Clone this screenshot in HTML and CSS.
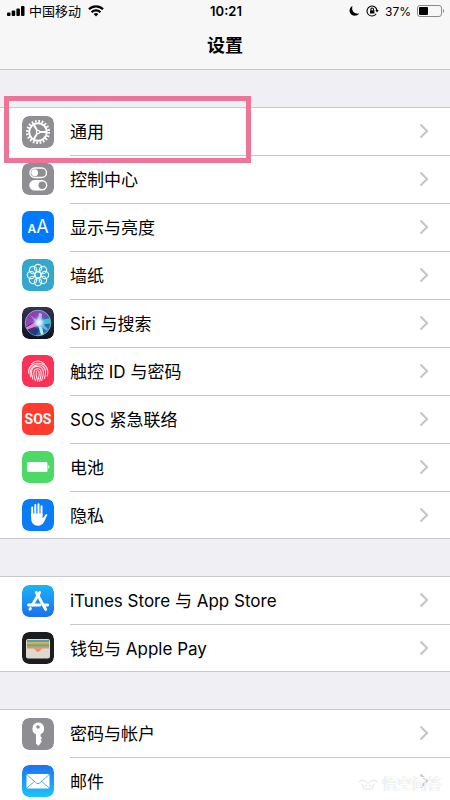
FILE: index.html
```html
<!DOCTYPE html>
<html lang="zh-CN">
<head>
    <meta charset="UTF-8">
    <meta name="viewport" content="width=device-width, initial-scale=1.0">
    <title>设置</title>
    <link rel="stylesheet" href="styles.css">
</head>
<body>
    <!-- chevron shared by all rows -->
    <svg class="defs" aria-hidden="true">
        <symbol id="chevron" viewBox="0 0 10 16">
            <path d="M1.5 1.5 8 8l-6.5 6.5" fill="none" stroke="#c4c4c8" stroke-width="2"/>
        </symbol>
    </svg>

    <div class="screen">
        <header class="top">
            <div class="status-bar">
                <div class="status-left">
                    <svg width="18" height="12" viewBox="0 0 18 12">
                        <rect x="0" y="7.500" width="3.500" height="3.500" rx="1"/>
                        <rect x="4.700" y="5.500" width="3.500" height="5.500" rx="1"/>
                        <rect x="9.400" y="3.500" width="3.500" height="7.500" rx="1"/>
                        <rect x="14" y="1" width="3.500" height="10" rx="1"/>
                    </svg>
                    <span class="carrier">中国移动</span>
                    <svg width="16" height="12" viewBox="0 0 16 12" fill="none" stroke="#000" stroke-width="2.200">
                        <path d="M1 4.300a10 10 0 0 1 14 0"/>
                        <path d="M3.600 7.200a6.300 6.300 0 0 1 8.800 0"/>
                        <path d="M8 11.500 5.600 9.100a3.500 3.500 0 0 1 4.800 0z" fill="#000" stroke="none"/>
                    </svg>
                </div>
                <span class="clock">10:21</span>
                <div class="status-right">
                    <svg width="11" height="12" viewBox="0 0 11 12">
                        <path d="M3.500 1C.8 2.300-.1 5.300 1 7.800 2.600 11.200 7.400 12 10.300 8.600 5.500 9.400 2 6 3.500 1z"/>
                    </svg>
                    <svg width="13" height="12" viewBox="0 0 13 12" fill="none" stroke="#000" stroke-width="1.100">
                        <path d="M10.200 8.800A5 5 0 1 1 11 5.500"/>
                        <path d="M9.300 5h3.400L11 7.600z" fill="#000" stroke="none"/>
                        <rect x="4" y="5.300" width="4.400" height="3.200" fill="#000" stroke="none"/>
                        <path d="M4.900 5.500V4.300a1.300 1.300 0 0 1 2.600 0v1.200"/>
                    </svg>
                    <span>37%</span>
                    <svg width="28" height="12" viewBox="0 0 28 12">
                        <rect x="0.500" y="0.500" width="24" height="11" rx="2.500" fill="none" stroke="#8a8a8a"/>
                        <rect x="2" y="2" width="9" height="8" rx="1"/>
                        <path d="M26 4v4c1.500-.6 1.500-3.400 0-4z" fill="#8a8a8a"/>
                    </svg>
                </div>
            </div>
            <h1>设置</h1>
        </header>

        <main>
            <ul class="group">
                <li class="row">
                    <a href="#general">
                        <svg class="icon" viewBox="0 0 32 32">
                            <rect width="32" height="32" rx="7" fill="#8e8e93"/>
                            <circle cx="16" cy="16" r="10.800" fill="none" stroke="#fff" stroke-width="2.600" stroke-dasharray="1.700 1.693"/>
                            <circle cx="16" cy="16" r="8.800" fill="none" stroke="#fff" stroke-width="2"/>
                            <path d="M16 16h9M16 16l-4.500-7.700M16 16l-4.500 7.700" stroke="#fff" stroke-width="2"/>
                            <circle cx="16" cy="16" r="2.200" fill="#fff"/>
                            <circle cx="16" cy="16" r="1" fill="#8e8e93"/>
                        </svg>
                        <span class="label">通用</span>
                        <svg class="chevron"><use href="#chevron"/></svg>
                    </a>
                    <div class="marker"></div>
                </li>
                <li class="row">
                    <a href="#control-center">
                        <svg class="icon" viewBox="0 0 32 32">
                            <rect width="32" height="32" rx="7" fill="#8e8e93"/>
                            <rect x="8" y="5" width="16.500" height="9.500" rx="4.700" fill="none" stroke="#fff" stroke-width="1.400"/>
                            <circle cx="12.700" cy="9.750" r="3.400" fill="#fff"/>
                            <rect x="7.300" y="17" width="18" height="10.500" rx="5.200" fill="#fff"/>
                            <circle cx="20.200" cy="22.200" r="3.700" fill="#8e8e93"/>
                        </svg>
                        <span class="label">控制中心</span>
                        <svg class="chevron"><use href="#chevron"/></svg>
                    </a>
                </li>
                <li class="row">
                    <a href="#display">
                        <span class="icon icon-display"><small>A</small>A</span>
                        <span class="label">显示与亮度</span>
                        <svg class="chevron"><use href="#chevron"/></svg>
                    </a>
                </li>
                <li class="row">
                    <a href="#wallpaper">
                        <svg class="icon" viewBox="0 0 32 32">
                            <rect width="32" height="32" rx="7" fill="#35a6cc"/>
                            <g fill="none" stroke="#e6f7fc" stroke-width="1.200">
                                <circle cx="16" cy="9" r="3.700"/>
                                <circle cx="20.950" cy="11.050" r="3.700"/>
                                <circle cx="23" cy="16" r="3.700"/>
                                <circle cx="20.950" cy="20.950" r="3.700"/>
                                <circle cx="16" cy="23" r="3.700"/>
                                <circle cx="11.050" cy="20.950" r="3.700"/>
                                <circle cx="9" cy="16" r="3.700"/>
                                <circle cx="11.050" cy="11.050" r="3.700"/>
                                <circle cx="16" cy="16" r="3"/>
                            </g>
                        </svg>
                        <span class="label">墙纸</span>
                        <svg class="chevron"><use href="#chevron"/></svg>
                    </a>
                </li>
                <li class="row">
                    <a href="#siri">
                        <svg class="icon" viewBox="0 0 32 32">
                            <defs>
                                <linearGradient id="siri-bg" x1="0" y1="0" x2="0" y2="1">
                                    <stop offset="0" stop-color="#35324e"/>
                                    <stop offset="1" stop-color="#101421"/>
                                </linearGradient>
                                <linearGradient id="siri-orb" x1="0" y1="0" x2="1" y2="1">
                                    <stop offset="0" stop-color="#a12c94"/>
                                    <stop offset="0.400" stop-color="#8350c0"/>
                                    <stop offset="0.650" stop-color="#2d62a4"/>
                                    <stop offset="1" stop-color="#169aa4"/>
                                </linearGradient>
                                <radialGradient id="siri-glow">
                                    <stop offset="0" stop-color="#fff"/>
                                    <stop offset="0.400" stop-color="#d5f0ff" stop-opacity="0.800"/>
                                    <stop offset="1" stop-color="#5fc8e8" stop-opacity="0"/>
                                </radialGradient>
                            </defs>
                            <rect width="32" height="32" rx="7" fill="url(#siri-bg)"/>
                            <circle cx="16" cy="16" r="12.800" fill="url(#siri-orb)" stroke="#7db3cf" stroke-width="0.900"/>
                            <path d="M16 16C9 15 5 19 4 20c2 5 6 8 10 8.500C17 25 18 20 16 16z" fill="#1c2a6b" opacity="0.700"/>
                            <path d="M17 13 4 20.500l1.500 2L18 18z" fill="#f47cc0"/>
                            <path d="M16 14 27.500 11l.8 5.500L17 18z" fill="#35c3d0"/>
                            <path d="M15 15l2-9 3 .8L19 16z" fill="#cfa8f4"/>
                            <path d="M8 8l10 8-1.500 2.500z" fill="#d88bea"/>
                            <path d="M15.500 16l3.500 12 2.500-1L19 15z" fill="#b8f4f6"/>
                            <path d="M18 14l8 8-1.500 1.500L16 18z" fill="#6fb0ea"/>
                            <circle cx="17" cy="15.500" r="7" fill="url(#siri-glow)"/>
                        </svg>
                        <span class="label">Siri 与搜索</span>
                        <svg class="chevron"><use href="#chevron"/></svg>
                    </a>
                </li>
                <li class="row">
                    <a href="#touch-id">
                        <svg class="icon" viewBox="0 0 32 32">
                            <rect width="32" height="32" rx="7" fill="#fc3158"/>
                            <g fill="none" stroke="#ffe3e8" stroke-width="1.100" stroke-linecap="round">
                                <path d="M9.500 8.800c4-3.500 9-3.500 13 0"/>
                                <path d="M6.500 18c-1-12 18.500-13.500 19.300-1.500.1 1.500-.1 3-.6 4.500"/>
                                <path d="M8.500 21.500C5.500 7 23.500 6.500 23.600 17c0 2.500-.4 4.500-1.300 6.500"/>
                                <path d="M10.800 24c-1-3-1.600-5.500-1.200-8 1.200-6.500 11.600-6 11.800 1 .1 3-.6 6-1.800 8.500"/>
                                <path d="M13.500 25.800C12 22 11.400 19 12 16.500c1-4 7-3.600 7.200.8.100 3.300-.6 6.200-1.600 8.900"/>
                                <path d="M15.800 26.300C14.600 23 14 20 14.200 17.500c.3-2.300 2.800-2.200 2.900 0 .1 2.500-.1 4.500-.7 6.500"/>
                            </g>
                        </svg>
                        <span class="label">触控 ID 与密码</span>
                        <svg class="chevron"><use href="#chevron"/></svg>
                    </a>
                </li>
                <li class="row">
                    <a href="#sos">
                        <span class="icon icon-sos">SOS</span>
                        <span class="label">SOS 紧急联络</span>
                        <svg class="chevron"><use href="#chevron"/></svg>
                    </a>
                </li>
                <li class="row">
                    <a href="#battery">
                        <svg class="icon" viewBox="0 0 32 32">
                            <rect width="32" height="32" rx="7" fill="#4cd964"/>
                            <rect x="5" y="11" width="20.500" height="10" rx="1.500" fill="#fff"/>
                            <path d="M26.300 14v4c1.500-.5 1.500-3.500 0-4z" fill="#fff"/>
                        </svg>
                        <span class="label">电池</span>
                        <svg class="chevron"><use href="#chevron"/></svg>
                    </a>
                </li>
                <li class="row">
                    <a href="#privacy">
                        <svg class="icon" viewBox="0 0 32 32">
                            <rect width="32" height="32" rx="7" fill="#0a7cf5"/>
                            <g stroke="#fff" stroke-width="2" stroke-linecap="round" fill="none">
                                <path d="M10.200 17V8.500M13.300 16V6M16.500 16V5.300M19.500 16V7.300"/>
                                <path d="M20.500 21.500l3.800-5.500"/>
                            </g>
                            <path d="M9.200 14.500h11.300v4.500l1.200.2 1.500-1.700 1.100.6c-1.700 3.900-3.100 8.600-8 8.600-5.100 0-7.100-3.200-7.100-7.500z" fill="#fff"/>
                        </svg>
                        <span class="label">隐私</span>
                        <svg class="chevron"><use href="#chevron"/></svg>
                    </a>
                </li>
            </ul>

            <ul class="group">
                <li class="row">
                    <a href="#itunes">
                        <svg class="icon" viewBox="0 0 32 32">
                            <defs>
                                <linearGradient id="store-bg" x1="0" y1="0" x2="0" y2="1">
                                    <stop offset="0" stop-color="#1bb4f7"/>
                                    <stop offset="1" stop-color="#1b70ee"/>
                                </linearGradient>
                            </defs>
                            <rect width="32" height="32" rx="7" fill="url(#store-bg)"/>
                            <g stroke="#fff" stroke-width="2.800" stroke-linecap="round">
                                <path d="M14.300 7.500 23.700 24.500"/>
                                <path d="M17.700 7.500 10.200 20"/>
                                <path d="M6.500 20h11.500M23 20h2.700"/>
                                <path d="M8.400 23.500l-.5.900"/>
                            </g>
                        </svg>
                        <span class="label">iTunes Store 与 App Store</span>
                        <svg class="chevron"><use href="#chevron"/></svg>
                    </a>
                </li>
                <li class="row">
                    <a href="#wallet">
                        <svg class="icon" viewBox="0 0 32 32">
                            <rect width="32" height="32" rx="7" fill="#1d1d1f"/>
                            <rect x="4" y="7" width="24" height="19.500" rx="2" fill="#ded9cf"/>
                            <path d="M5 8h22v2.300H5z" fill="#5b9cb0"/>
                            <path d="M5 10.300h22v2.400H5z" fill="#d6ad45"/>
                            <path d="M5 12.300h22v2.500H5z" fill="#73a660"/>
                            <path d="M5 14.800h22v1.600H5z" fill="#ee8973"/>
                            <path d="M11 16.200h10c-2 0-2.600 3.600-5 3.600s-3-3.600-5-3.600z" fill="#ee8973"/>
                        </svg>
                        <span class="label">钱包与 Apple Pay</span>
                        <svg class="chevron"><use href="#chevron"/></svg>
                    </a>
                </li>
            </ul>

            <ul class="group">
                <li class="row">
                    <a href="#passwords">
                        <svg class="icon" viewBox="0 0 32 32">
                            <rect width="32" height="32" rx="7" fill="#8e8e93"/>
                            <path d="M16 4.500a6.200 6.200 0 0 1 2.600 11.800v2.200l1.500 1.500-1.500 1.700 1.300 1.500-1.300 1.500v.8L16.300 28 14 25.500v-9.200A6.200 6.200 0 0 1 16 4.500z" fill="#fff"/>
                            <circle cx="16" cy="9" r="1.800" fill="#8e8e93"/>
                        </svg>
                        <span class="label">密码与帐户</span>
                        <svg class="chevron"><use href="#chevron"/></svg>
                    </a>
                </li>
                <li class="row">
                    <a href="#mail">
                        <svg class="icon" viewBox="0 0 32 32">
                            <defs>
                                <linearGradient id="mail-bg" x1="0" y1="0" x2="0" y2="1">
                                    <stop offset="0" stop-color="#1d72f0"/>
                                    <stop offset="1" stop-color="#1cc4f8"/>
                                </linearGradient>
                            </defs>
                            <rect width="32" height="32" rx="7" fill="url(#mail-bg)"/>
                            <rect x="4.500" y="9" width="23" height="14.500" rx="1.500" fill="#fff"/>
                            <path d="M5 9.800l9.500 8.300q1.500 1.200 3 0L27 9.800M5 22.800l7.500-6.400M27 22.800l-7.500-6.400" fill="none" stroke="#4ba3de" stroke-width="0.900"/>
                        </svg>
                        <span class="label">邮件</span>
                        <svg class="chevron"><use href="#chevron"/></svg>
                    </a>
                    <div class="watermark">
                        <svg width="20" height="14" viewBox="0 0 20 14" fill="none" stroke="#e2e2e2">
                            <path d="M1 5c2-3 5-2 9 1 4-3 7-4 9-1"/>
                            <path d="M4 7l2 5h8l2-5M7 9h2M11 9h2"/>
                        </svg>
                        <span>悟空问答</span>
                    </div>
                </li>
            </ul>
        </main>
    </div>
</body>
</html>
```

FILE: styles.css
```css
* {
    box-sizing: border-box;
}
body {
    margin: 0;
    font-family: Inter, "Noto Sans CJK SC", sans-serif;
    background-color: #efeff4;
    color: #000;
}
.defs {
    position: absolute;
    width: 0;
    height: 0;
}
.screen {
    height: 100vh;
    overflow-x: hidden;
    overflow-y: auto;
    scrollbar-width: none;
}

/* status bar + title */
.top {
    border-bottom: 1px solid #c8c7cc;
    background-color: #f7f7f7;
}
.status-bar {
    display: grid;
    grid-template-columns: 1fr auto 1fr;
    align-items: center;
    height: 22px;
    padding: 0 5px 0 7px;
    font-size: 12px;
}
.status-left,
.status-right {
    display: flex;
    align-items: center;
}
.status-left {
    gap: 4px;
}
.carrier {
    font-size: 13px;
    line-height: 20px;
    margin-right: 3px;
}
.clock {
    font-size: 13px;
    font-weight: 600;
}
.status-right {
    justify-content: flex-end;
    gap: 6px;
}
h1 {
    margin: 0;
    font-size: 18px;
    font-weight: 700;
    line-height: 47px;
    text-align: center;
}

/* list groups */
.group {
    list-style: none;
    margin: 37px 0 0;
    padding: 0;
    background-color: #fff;
}
.row {
    position: relative;
    height: 48px;
}
.row:first-child {
    border-top: 1px solid #c8c7cc;
}
.row:last-child {
    border-bottom: 1px solid #c8c7cc;
}
.row a {
    display: flex;
    align-items: center;
    height: 100%;
    padding-left: 22px;
    color: inherit;
    text-decoration: none;
}
.icon {
    flex: none;
    width: 32px;
    height: 32px;
    margin-right: 16px;
    border-radius: 7px;
}
.icon-display {
    display: flex;
    align-items: baseline;
    justify-content: center;
    background-color: #007aff;
    color: #fff;
    font-size: 18px;
    line-height: 32px;
}
.icon-display small {
    font-size: 12px;
    font-weight: 600;
}
.icon-sos {
    background-color: #ff3b30;
    color: #fff;
    font-family: Roboto, sans-serif;
    font-size: 14px;
    font-weight: 700;
    line-height: 32px;
    text-align: center;
}
.label {
    display: flex;
    align-items: center;
    flex: 1;
    height: 100%;
    padding-bottom: 2px;
    font-size: 17px;
    white-space: pre;
    border-top: 1px solid #c8c7cc;
}
.chevron {
    flex: none;
    box-sizing: content-box;
    width: 10px;
    height: 16px;
    padding: 15px 21px 16px 0;
    border-top: 1px solid #c8c7cc;
}
.row:first-child .label,
.row:first-child .chevron {
    border-top: none;
}

/* overlays */
.marker {
    position: absolute;
    z-index: 1;
    top: -12px;
    left: 4px;
    width: 247px;
    height: 67px;
    border: 5px solid #ee7498;
}
.watermark {
    position: absolute;
    right: 8px;
    bottom: 10px;
    display: flex;
    align-items: center;
    gap: 4px;
    font-size: 15px;
    line-height: 20px;
    color: #fff;
    text-shadow: 0 0 1px #bbb;
}
```
